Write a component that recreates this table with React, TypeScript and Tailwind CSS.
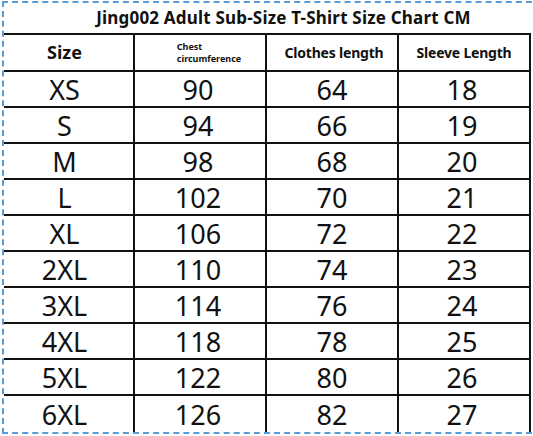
const rows: [string, number, number, number][] = [
  ['XS', 90, 64, 18],
  ['S', 94, 66, 19],
  ['M', 98, 68, 20],
  ['L', 102, 70, 21],
  ['XL', 106, 72, 22],
  ['2XL', 110, 74, 23],
  ['3XL', 114, 76, 24],
  ['4XL', 118, 78, 25],
  ['5XL', 122, 80, 26],
  ['6XL', 126, 82, 27],
]

const cell = 'flex items-center justify-center border-r-2 border-[#111]'

export default function App() {
  return (
    <div className="h-[436px] w-[533px] overflow-hidden bg-white font-['Noto_Sans',sans-serif] text-[#111]">
      <div className="ml-[2px] mt-[1px] w-[540px] border-b-2 border-l-2 border-t-2 border-dashed border-[#5b9bd5]">
        <div className="flex h-[32px] w-[527px] items-center justify-center border-b-2 border-[#111] pl-8 text-[17px] font-bold tracking-[0.2px]">
          Jing002 Adult Sub-Size T-Shirt Size Chart CM
        </div>

        <div className="grid h-[37px] w-[527px] grid-cols-[131px_132px_132px_132px] border-b-2 border-[#111] font-bold">
          <div className={`${cell} pr-2 text-[18px]`}>Size</div>
          <div className={`${cell} pl-[18px]`}>
            <div className="text-[9px] leading-[12px]">
              <div>Chest</div>
              <div>circumference</div>
            </div>
          </div>
          <div className={`${cell} pl-1 text-[14px] tracking-[-0.2px]`}>Clothes length</div>
          <div className={`${cell} text-[14px] tracking-[-0.2px]`}>Sleeve Length</div>
        </div>

        {rows.map(([size, chest, length, sleeve], i) => (
          <div
            key={size}
            className={`grid h-[36px] w-[527px] grid-cols-[131px_132px_132px_132px] text-[27px] leading-none ${
              i < rows.length - 1 ? 'border-b-2 border-[#111]' : ''
            }`}
          >
            <div className={`${cell} pr-2`}>{size}</div>
            <div className={`${cell} pr-1`}>{chest}</div>
            <div className={cell}>{length}</div>
            <div className={`${cell} pr-1`}>{sleeve}</div>
          </div>
        ))}
      </div>
    </div>
  )
}
